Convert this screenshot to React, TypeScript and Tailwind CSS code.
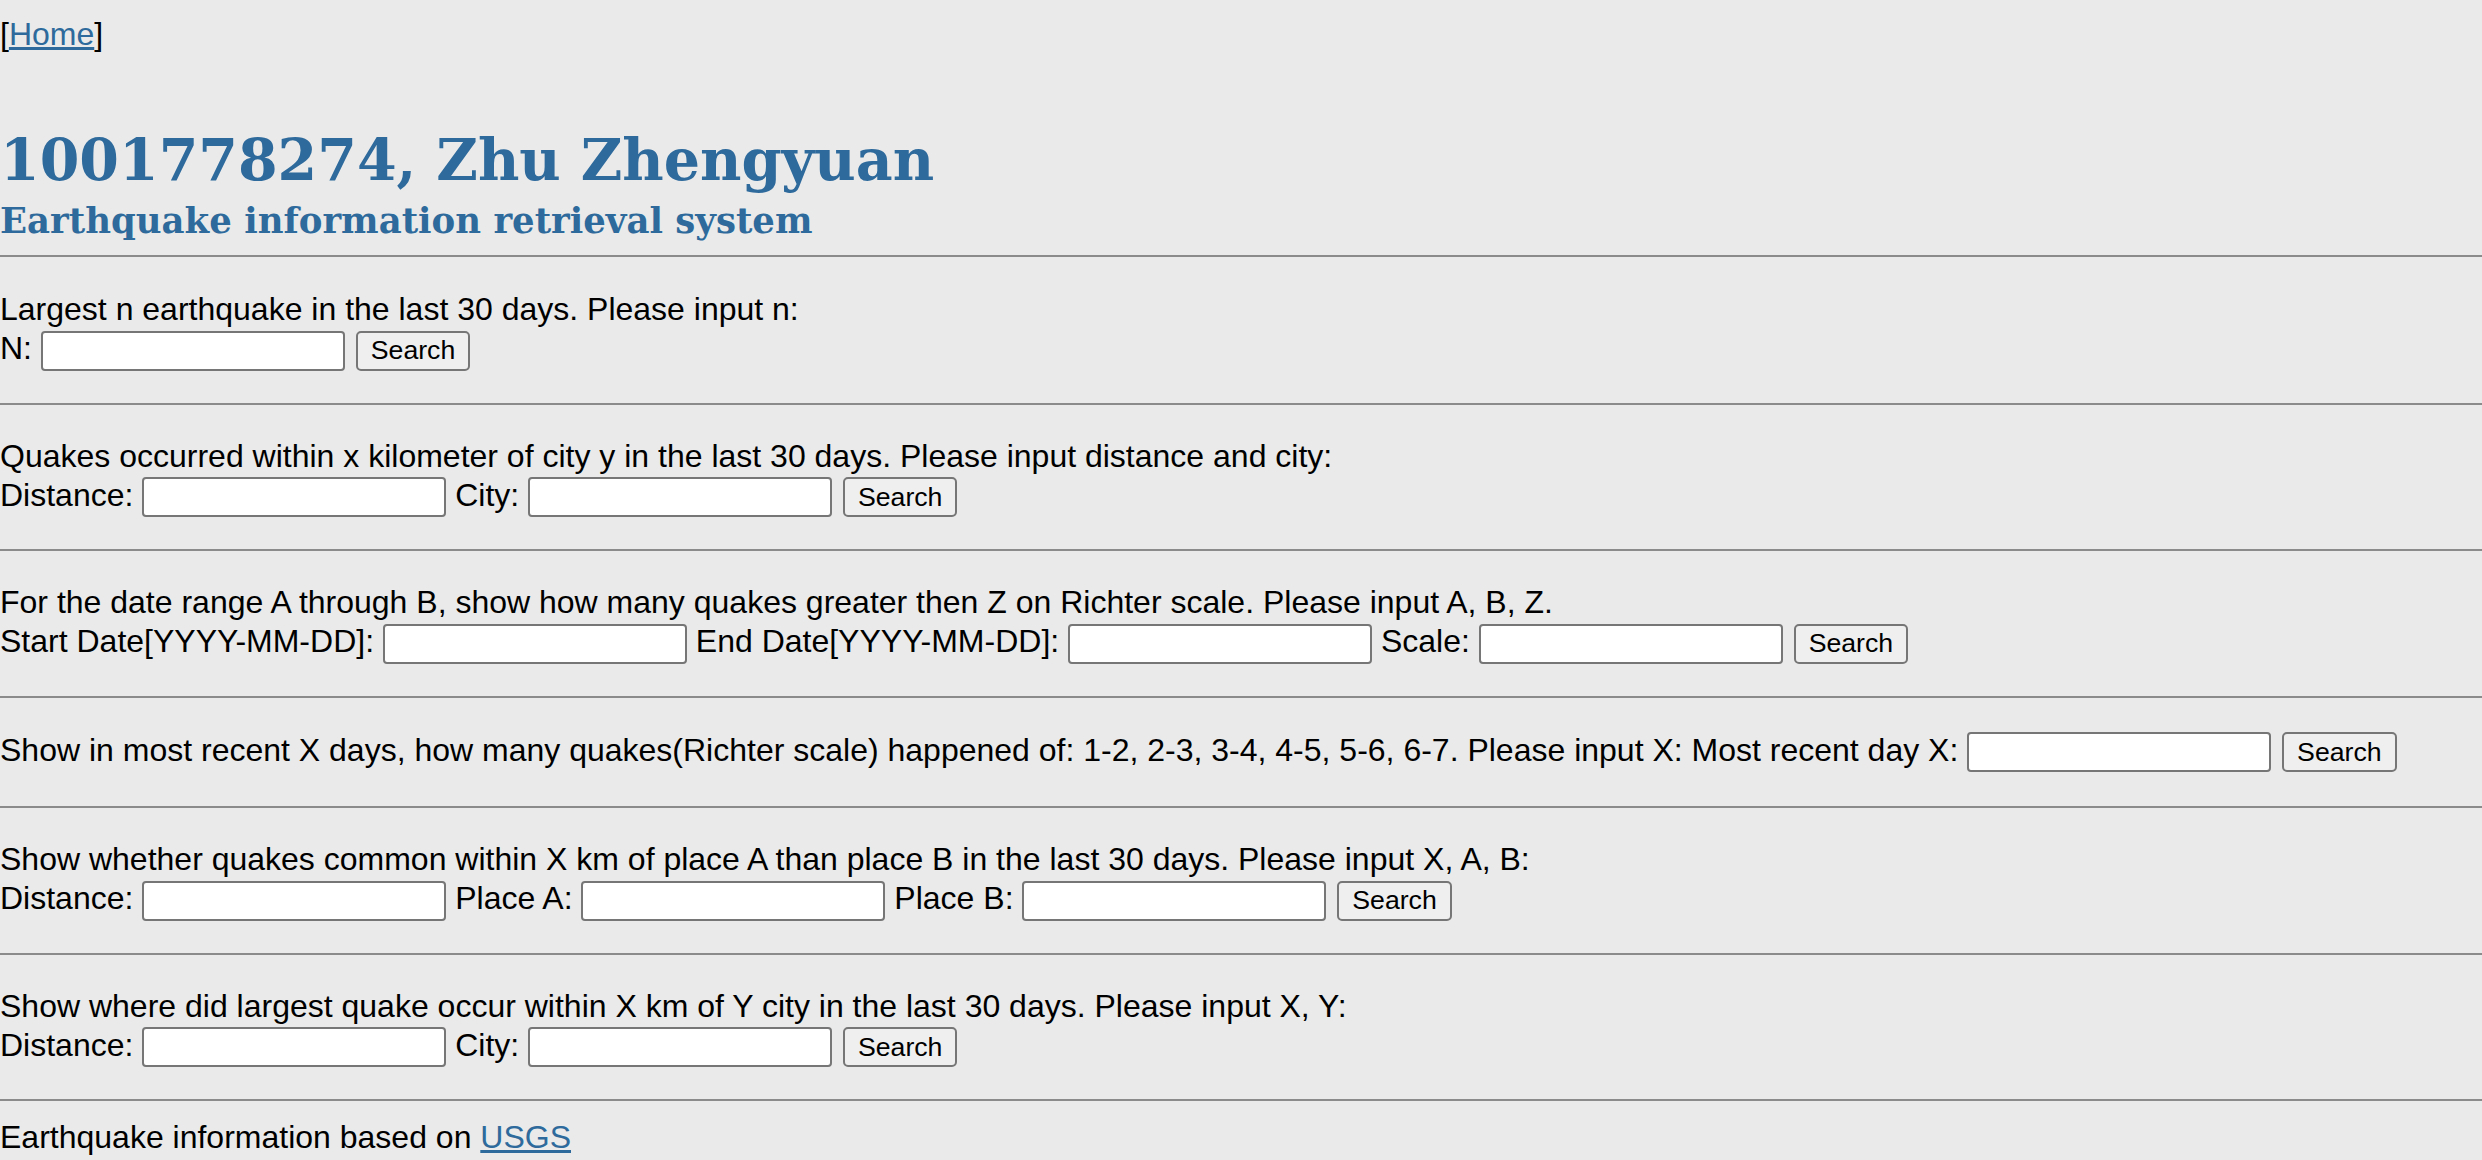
import React from 'react';

const Field: React.FC = () => (
  <input
    type="text"
    className="inline-block w-[304px] h-[40px] px-[4px] py-[2px] align-baseline bg-white border-2 border-[#767676] rounded-[4px] text-[26.67px] leading-[normal] font-['Liberation_Sans',Arial,sans-serif]"
  />
);

const SearchBtn: React.FC = () => (
  <button
    type="submit"
    className="inline-block ml-[2px] h-[40px] px-[13px] align-baseline bg-[#efefef] border-2 border-[#767676] rounded-[5px] text-[26.67px] leading-[normal] text-black font-['Liberation_Sans',Arial,sans-serif]"
  >
    Search
  </button>
);

const Rule: React.FC = () => <hr className="my-[16px] border-0 border-t-2 border-[#8b8b8b]" />;

const App: React.FC = () => {
  return (
    <div className="min-h-screen bg-[#eaeaea] text-black text-[32px] leading-[normal] font-['Liberation_Sans',Arial,sans-serif] pt-[16px]">
      {/* Nav */}
      <div>
        [<a href="#" className="text-[#2e6a9c] underline">Home</a>]
      </div>

      {/* Title */}
      <h1 className="mt-[75px] text-[57px] leading-[64px] font-bold text-[#2e6a9c] font-['DejaVu_Serif',Georgia,serif]">
        1001778274, Zhu Zhengyuan
      </h1>
      <h2 className="mt-[10px] mb-[1px] text-[35.5px] leading-[37px] font-bold text-[#2e6a9c] font-['DejaVu_Serif',Georgia,serif]">
        Earthquake information retrieval system
      </h2>

      <Rule />

      <form className="pt-[18px] pb-[16px]">
        <div>Largest n earthquake in the last 30 days. Please input n:</div>
        <div className="mt-[2px]">
          N: <Field /> <SearchBtn />
        </div>
      </form>

      <Rule />

      <form className="pt-[17px] pb-[16px]">
        <div>Quakes occurred within x kilometer of city y in the last 30 days. Please input distance and city:</div>
        <div className="mt-[2px]">
          Distance: <Field /> City: <Field /> <SearchBtn />
        </div>
      </form>

      <Rule />

      <form className="pt-[17px] pb-[16px]">
        <div>For the date range A through B, show how many quakes greater then Z on Richter scale. Please input A, B, Z.</div>
        <div className="mt-[2px]">
          Start Date[YYYY-MM-DD]: <Field /> End Date[YYYY-MM-DD]: <Field /> Scale: <Field /> <SearchBtn />
        </div>
      </form>

      <Rule />

      <form className="py-[18px]">
        <div>
          Show in most recent X days, how many quakes(Richter scale) happened of: 1-2, 2-3, 3-4, 4-5, 5-6, 6-7. Please
          input X: Most recent day X: <Field /> <SearchBtn />
        </div>
      </form>

      <Rule />

      <form className="pt-[17px] pb-[16px]">
        <div>Show whether quakes common within X km of place A than place B in the last 30 days. Please input X, A, B:</div>
        <div className="mt-[2px]">
          Distance: <Field /> Place A: <Field /> Place B: <Field /> <SearchBtn />
        </div>
      </form>

      <Rule />

      <form className="pt-[17px] pb-[16px]">
        <div>Show where did largest quake occur within X km of Y city in the last 30 days. Please input X, Y:</div>
        <div className="mt-[2px]">
          Distance: <Field /> City: <Field /> <SearchBtn />
        </div>
      </form>

      <Rule />

      <div className="pt-[2px]">
        Earthquake information based on <a href="#" className="text-[#2e6a9c] underline">USGS</a>
      </div>
    </div>
  );
};

export default App;
